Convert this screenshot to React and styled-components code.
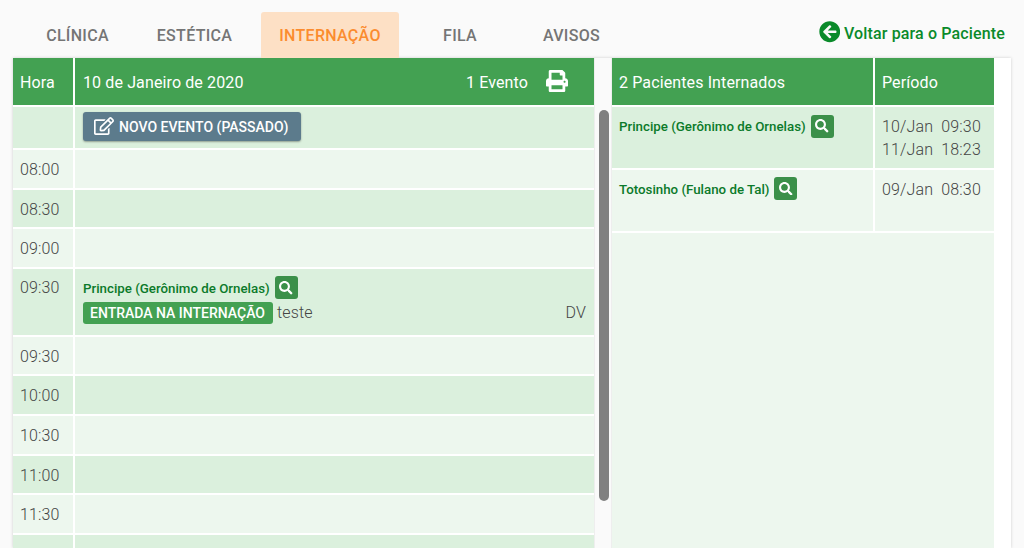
import React from 'react'
import styled, { createGlobalStyle } from 'styled-components'
import { FaArrowCircleLeft, FaPrint, FaSearch, FaRegEdit } from 'react-icons/fa'

const Global = createGlobalStyle`
html, body { margin: 0; padding: 0; height: 548px; overflow: hidden; background: #fafafa; }
* { box-sizing: border-box; }
body { font-family: Roboto, "Liberation Sans", sans-serif; color: #555; }
`

const Page = styled.div`
width: 1024px;
height: 548px;
overflow: hidden;
`

const TopBar = styled.div`
display: flex;
justify-content: space-between;
height: 58px;
padding: 12px 19px 0 27px;
`

const Tabs = styled.div`
display: flex;
`

const Tab = styled.div`
width: ${p => p.$w}px;
height: 46px;
display: flex;
align-items: center;
justify-content: center;
font-size: 16px;
font-weight: 500;
letter-spacing: .3px;
color: ${p => p.$active ? '#fb8c2f' : '#757575'};
background: ${p => p.$active ? '#fde0c5' : 'transparent'};
border-radius: 3px 3px 0 0;
`

const BackLink = styled.div`
display: flex;
align-items: center;
gap: 4px;
height: 22px;
margin-top: 10px;
font-size: 16px;
font-weight: 500;
letter-spacing: .14px;
color: #0a8a2a;
svg { font-size: 21.5px; margin-top: -2px; }
`

const Content = styled.div`
display: flex;
width: 998px;
margin-left: 13px;
background: #fff;
box-shadow: 0 0 3px rgba(0,0,0,.18);
height: 490px;
`

const LeftPane = styled.div`
width: 581px;
flex-shrink: 0;
`

const Track = styled.div`
width: 18px;
flex-shrink: 0;
padding: 52px 4px 0 5px;
background: #fafafa;
border-left: 1px solid #eee;
border-right: 1px solid #eee;
`

const Thumb = styled.div`
width: 10px;
height: 391px;
margin-left: -1px;
background: #808080;
border-radius: 5px;
`

const RightPane = styled.div`
width: 382px;
flex-shrink: 0;
display: flex;
flex-direction: column;
`

const Filler = styled.div`
flex: 1;
width: 382px;
background: #edf7ee;
`

const Row = styled.div`
display: grid;
grid-template-columns: ${p => p.$cols};
column-gap: 2px;
height: ${p => p.$h}px;
margin-bottom: 2px;
flex-shrink: 0;
`

const HeadCell = styled.div`
display: flex;
align-items: center;
justify-content: space-between;
padding: 1px 7px 0 ${p => p.$left || 7}px;
background: #43a152;
color: #fff;
font-size: 16px;
letter-spacing: .12px;
`

const HeadRight = styled.div`
display: flex;
align-items: center;
gap: 18px;
padding-right: 19px;
svg { font-size: 22px; margin-top: -2px; }
`

const Cell = styled.div`
padding: ${p => p.$pad || '0 7px'};
background: ${p => p.$dark ? '#dbf0dd' : '#edf7ee'};
font-size: 16px;
font-weight: 300;
color: #444;
line-height: 23px;
letter-spacing: .15px;
`

const NewButton = styled.div`
display: inline-flex;
align-items: center;
gap: 5px;
height: 29.5px;
margin-top: 4.7px;
padding: 1px 12px 0 11px;
background: #5c7b8c;
border-radius: 3px;
box-shadow: 0 1px 2px rgba(0,0,0,.35);
color: #fff;
font-size: 14px;
font-weight: 500;
line-height: 1;
letter-spacing: 0;
svg { font-size: 20px; margin-top: -1px; }
`

const NameLine = styled.div`
display: flex;
align-items: center;
gap: 5px;
`

const Name = styled.span`
padding-top: 1px;
font-size: 13.3px;
font-weight: 500;
letter-spacing: 0;
color: #0b7a2a;
`

const SearchBtn = styled.div`
width: 23px;
height: 23px;
display: flex;
align-items: center;
justify-content: center;
background: #3b9049;
border-radius: 3px;
color: #fff;
font-size: 13.5px;
`

const EventLine = styled.div`
display: flex;
align-items: center;
margin-top: 2px;
height: 22px;
`

const Badge = styled.span`
display: inline-block;
height: 22px;
padding: 0 8px 0 7px;
background: #43a152;
border-radius: 3px;
color: #fff;
font-size: 14px;
font-weight: 500;
letter-spacing: 0;
line-height: 23px;
`

const Note = styled.span`
margin-left: 4px;
flex: 1;
`

const Plain = styled.div`
white-space: pre;
`

const LEFT = '60px 519px'
const RIGHT = '261px 119px'

const hours = [
  ['08:00', false], ['08:30', true], ['09:00', false],
]
const after = [
  ['09:30', false], ['10:00', true], ['10:30', false], ['11:00', true], ['11:30', false], ['12:00', true],
]

const Patient = ({ name }) => (
  <NameLine>
    <Name>{name}</Name>
    <SearchBtn><FaSearch /></SearchBtn>
  </NameLine>
)

const HourRow = ({ time, dark }) => (
  <Row $cols={LEFT} $h={37.6}>
    <Cell $dark={dark} $pad="8px 7px 0">{time}</Cell>
    <Cell $dark={dark} />
  </Row>
)

const App = () => (
  <Page>
    <Global />
    <TopBar>
      <Tabs>
        <Tab $w={101}>CLÍNICA</Tab>
        <Tab $w={133}>ESTÉTICA</Tab>
        <Tab $w={138} $active>INTERNAÇÃO</Tab>
        <Tab $w={122}>FILA</Tab>
        <Tab $w={101}>AVISOS</Tab>
      </Tabs>
      <BackLink><FaArrowCircleLeft />Voltar para o Paciente</BackLink>
    </TopBar>
    <Content>
      <LeftPane>
        <Row $cols={LEFT} $h={47}>
          <HeadCell>Hora</HeadCell>
          <HeadCell $left={8}>
            10 de Janeiro de 2020
            <HeadRight>1 Evento <FaPrint /></HeadRight>
          </HeadCell>
        </Row>
        <Row $cols={LEFT} $h={41}>
          <Cell $dark />
          <Cell $dark $pad="0 8px">
            <NewButton><FaRegEdit />NOVO EVENTO (PASSADO)</NewButton>
          </Cell>
        </Row>
        {hours.map(([t, d]) => <HourRow key={t} time={t} dark={d} />)}
        <Row $cols={LEFT} $h={66}>
          <Cell $dark $pad="7px 7px 0">09:30</Cell>
          <Cell $dark $pad="7px 8px 0">
            <Patient name="Principe (Gerônimo de Ornelas)" />
            <EventLine>
              <Badge>ENTRADA NA INTERNAÇÃO</Badge>
              <Note>teste</Note>
              DV
            </EventLine>
          </Cell>
        </Row>
        {after.map(([t, d]) => <HourRow key={t} time={t} dark={d} />)}
      </LeftPane>
      <Track><Thumb /></Track>
      <RightPane>
        <Row $cols={RIGHT} $h={47}>
          <HeadCell>2 Pacientes Internados</HeadCell>
          <HeadCell>Período</HeadCell>
        </Row>
        <Row $cols={RIGHT} $h={60.5}>
          <Cell $dark $pad="7px 7px 0"><Patient name="Principe (Gerônimo de Ornelas)" /></Cell>
          <Cell $dark $pad="8px 7px 0">
            <Plain>10/Jan  09:30</Plain>
            <Plain>11/Jan  18:23</Plain>
          </Cell>
        </Row>
        <Row $cols={RIGHT} $h={61}>
          <Cell $pad="7px 7px 0"><Patient name="Totosinho (Fulano de Tal)" /></Cell>
          <Cell $pad="8px 7px 0"><Plain>09/Jan  08:30</Plain></Cell>
        </Row>
        <Filler />
      </RightPane>
    </Content>
  </Page>
)

export default App
